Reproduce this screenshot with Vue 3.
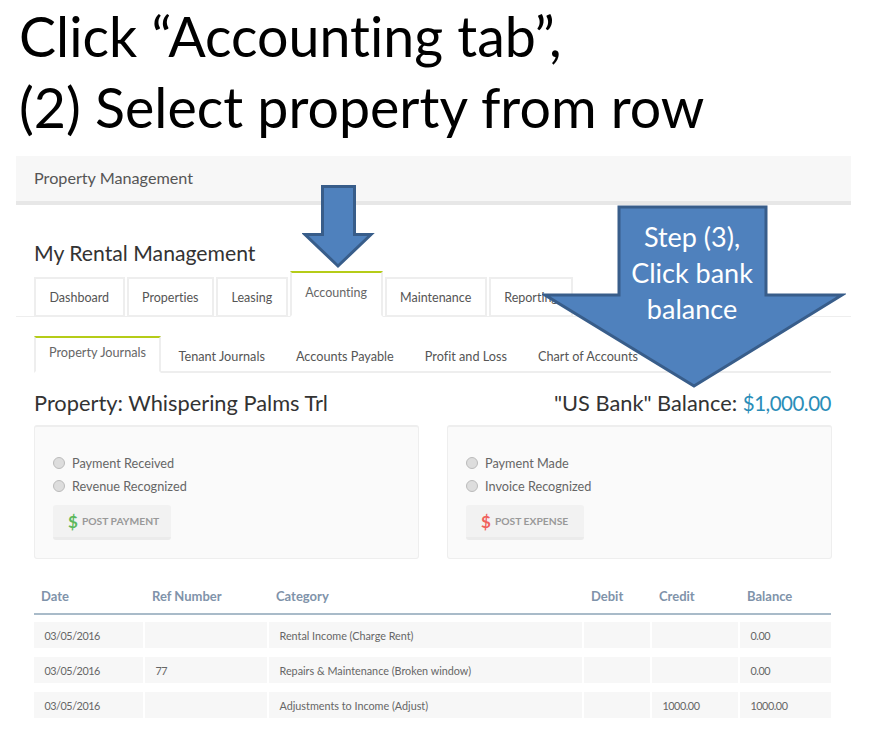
<script setup>
const mainTabs = ["Dashboard", "Properties", "Leasing", "Accounting", "Maintenance", "Reporting"];
const subTabs = ["Property Journals", "Tenant Journals", "Accounts Payable", "Profit and Loss", "Chart of Accounts"];
const panels = [
  { options: ["Payment Received", "Revenue Recognized"], button: "POST PAYMENT", tone: "green" },
  { options: ["Payment Made", "Invoice Recognized"], button: "POST EXPENSE", tone: "red" }
];
const columns = ["Date", "Ref Number", "Category", "Debit", "Credit", "Balance"];
const rows = [
  ["03/05/2016", "", "Rental Income (Charge Rent)", "", "", "0.00"],
  ["03/05/2016", "77", "Repairs & Maintenance (Broken window)", "", "", "0.00"],
  ["03/05/2016", "", "Adjustments to Income (Adjust)", "", "1000.00", "1000.00"]
];
</script>

<template>
  <div class="slide">
    <div class="slide-title">
      <div>Click “Accounting tab”,</div>
      <div>(2) Select property from row</div>
    </div>

    <div class="screen">
      <div class="navbar">Property Management</div>

      <h1 class="app-title">My Rental Management</h1>

      <div class="main-tabs">
        <div v-for="tab in mainTabs" :key="tab" class="main-tab" :class="{ active: tab === 'Accounting' }">{{ tab }}</div>
      </div>

      <div class="content">
        <div class="sub-tabs">
          <div v-for="(tab, i) in subTabs" :key="tab" class="sub-tab" :class="{ active: i === 0 }">{{ tab }}</div>
        </div>

        <div class="heading-row">
          <span>Property: Whispering Palms Trl</span>
          <span>"US Bank" Balance: <span class="amount">$1,000.00</span></span>
        </div>

        <div class="panels">
          <div v-for="panel in panels" :key="panel.button" class="panel">
            <div v-for="opt in panel.options" :key="opt" class="radio-row">
              <span class="radio"></span>{{ opt }}
            </div>
            <div class="post-btn">
              <span class="dollar" :class="panel.tone">$</span>{{ panel.button }}
            </div>
          </div>
        </div>

        <div class="grid head">
          <div v-for="col in columns" :key="col" class="th">{{ col }}</div>
        </div>
        <div v-for="(row, r) in rows" :key="r" class="grid row">
          <div v-for="(cell, c) in row" :key="c" class="td" :class="{ num: c !== 2 }">{{ cell }}</div>
        </div>
      </div>
    </div>

    <!-- callout arrows on top of the screenshot -->
    <svg class="arrow small" width="74" height="88" viewBox="0 0 74 88">
      <path d="M20.500 2.500H52.500V50.500H69L36 82L3 50.500H20.500Z" fill="#4f81bd" stroke="#385d8a" stroke-width="3" />
    </svg>
    <div class="arrow big">
      <svg width="304" height="184" viewBox="0 0 304 184">
        <path d="M77 2H224V90H300L152 181L3 90H77Z" fill="#4f81bd" stroke="#385d8a" stroke-width="3" />
      </svg>
      <div class="big-label">Step (3),<br />Click bank<br />balance</div>
    </div>
  </div>
</template>

<style scoped>
.slide {
  position: relative;
  width: 872px;
  height: 743px;
  overflow: hidden;
  background: #fff;
  font-family: "Lato", "Open Sans", sans-serif;
  font-variant-ligatures: none;
  color: #555;
}
.slide-title {
  height: 156px;
  box-sizing: border-box;
  padding: 0 0 0 19px;
  font-size: 55.500px;
  line-height: 71px;
  color: #000;
}
.screen {
  margin: 0 21px 0 16px;
}
.navbar {
  height: 45px;
  line-height: 44px;
  padding-left: 18px;
  background: #f7f7f7;
  border-bottom: 4px solid #e7e7e7;
  font-size: 16.200px;
  color: #555;
}
.app-title {
  margin: 0;
  padding: 34px 0 0 18px;
  height: 31px;
  font-weight: 400;
  font-size: 21.200px;
  line-height: 28px;
  color: #333;
}
.main-tabs {
  display: flex;
  align-items: flex-end;
  gap: 2px;
  height: 46px;
  padding-left: 18px;
  border-bottom: 1px solid #eee;
}
.main-tab {
  box-sizing: border-box;
  height: 40px;
  line-height: 38px;
  margin-bottom: -1px;
  padding: 0 13.500px;
  border: 2px solid #eee;
  font-size: 12.500px;
  color: #555;
  background: #fff;
}
.main-tab.active {
  height: 46px;
  line-height: 40px;
  border-top: 2px solid #b5cc18;
  border-bottom-color: #fff;
  color: #666;
}
.content {
  padding: 19px 20px 0 18px;
}
.sub-tabs {
  display: flex;
  align-items: flex-end;
  height: 35px;
  border-bottom: 2px solid #eee;
}
.sub-tab {
  height: 35px;
  line-height: 40px;
  padding: 0 15.500px;
  font-size: 12.700px;
  color: #555;
  box-sizing: border-box;
}
.sub-tab.active {
  height: 37px;
  margin-bottom: -2px;
  margin-right: 2px;
  padding: 0 13px;
  line-height: 28px;
  border: 2px solid #eee;
  border-top-color: #b5cc18;
  border-bottom-color: #fff;
  color: #666;
}
.heading-row {
  display: flex;
  justify-content: space-between;
  height: 52px;
  line-height: 60px;
  font-size: 21.800px;
  color: #333;
}
.amount {
  font-size: 20.500px;
  letter-spacing: -0.500px;
  color: #2a8db8;
}
.panels {
  display: flex;
  gap: 28px;
}
.panel {
  box-sizing: border-box;
  flex-shrink: 0;
  width: 385px;
  height: 134px;
  padding: 24px 18px 0;
  background: #fafafa;
  border: 1px solid #eee;
  border-top-width: 2px;
  border-radius: 3px;
}
.radio-row {
  display: flex;
  align-items: center;
  height: 23px;
  font-size: 12.700px;
  color: #666;
}
.radio {
  box-sizing: border-box;
  width: 12px;
  height: 12px;
  margin-right: 7px;
  border-radius: 50%;
  border: 1px solid #bbb;
  background: #ddd;
}
.post-btn {
  display: flex;
  align-items: center;
  box-sizing: border-box;
  width: 118px;
  height: 35px;
  margin-top: 8px;
  padding-left: 15px;
  background: #f2f2f2;
  border-bottom: 3px solid #ebebeb;
  border-radius: 3px;
  font-size: 10.300px;
  font-weight: 700;
  color: #999;
}
.dollar {
  font-size: 17px;
  font-weight: 700;
  margin-right: 4px;
}
.dollar.green {
  color: #5cb85c;
}
.dollar.red {
  color: #f0625d;
}
.grid {
  display: grid;
  grid-template-columns: 109px 122px 313px 66px 86px 91px;
  column-gap: 2px;
}
.head {
  height: 56px;
  margin-bottom: 7px;
  border-bottom: 2px solid #a9bbc9;
  box-sizing: border-box;
  align-items: end;
}
.th {
  padding: 0 0 8px 7px;
  font-size: 13px;
  font-weight: 700;
  color: #7f93aa;
  line-height: 18px;
}
.row {
  margin-bottom: 9px;
}
.td {
  height: 26px;
  line-height: 27px;
  padding-left: 10.500px;
  background: #f7f7f7;
  font-size: 10.800px;
  color: #666;
}
.td.num {
  letter-spacing: -0.450px;
}
.arrow {
  position: absolute;
}
.arrow.small {
  left: 302px;
  top: 184px;
}
.arrow.big {
  left: 542px;
  top: 205px;
  width: 304px;
  height: 184px;
}
.big-label {
  position: absolute;
  left: 0;
  top: 14px;
  width: 300px;
  text-align: center;
  font-size: 27px;
  line-height: 36px;
  color: #fff;
}
</style>
